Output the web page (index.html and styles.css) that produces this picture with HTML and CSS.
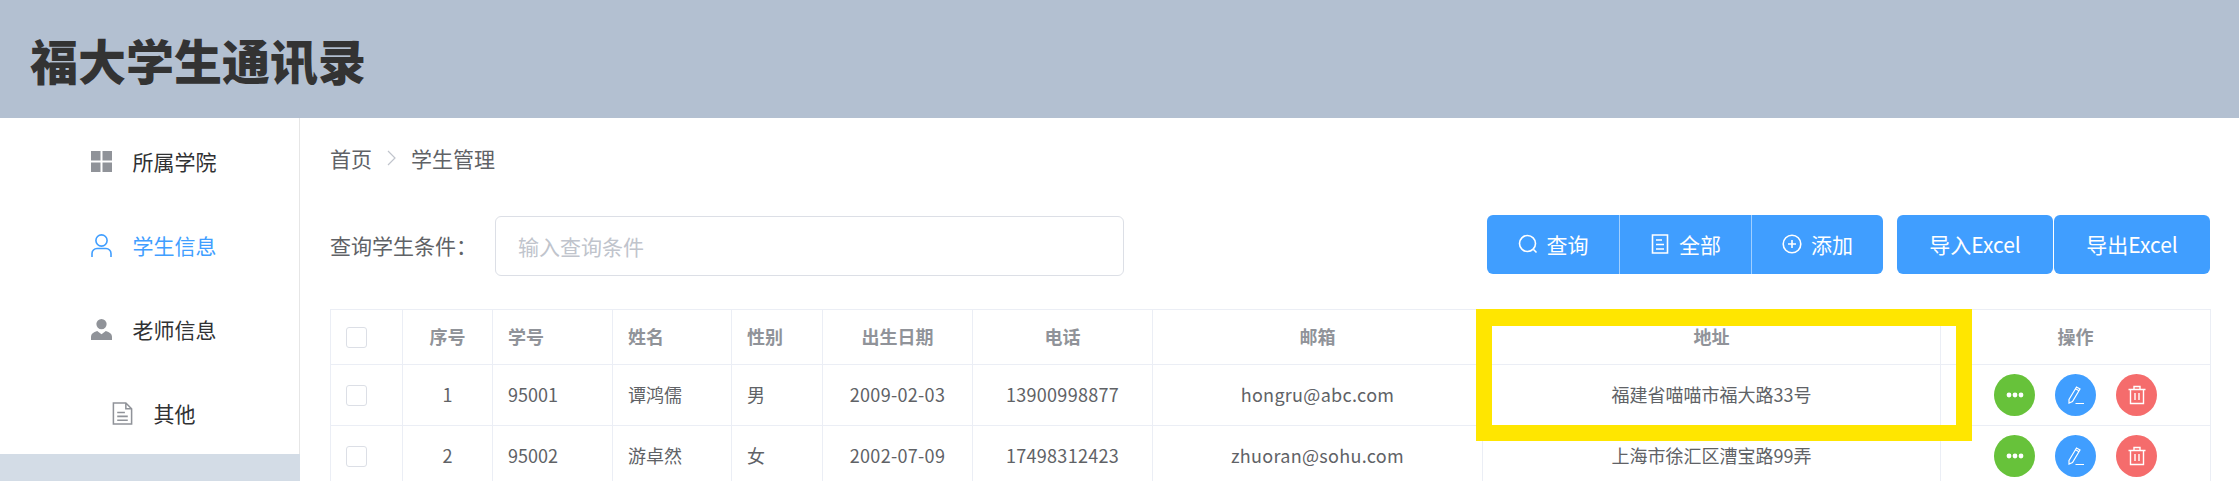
FILE: index.html
```html
<!DOCTYPE html>
<html lang="zh-CN">
<head>
  <meta charset="UTF-8">
  <title>福大学生通讯录</title>
  <link rel="stylesheet" href="styles.css">
</head>
<body>
  <header class="top-bar">
    <h1>福大学生通讯录</h1>
  </header>

  <div class="layout">
    <!-- 侧边栏 -->
    <aside class="side">
      <div class="side-item">
        <svg class="side-icon" viewBox="0 0 21 21"><path fill="#909399" d="M0 0h9.500v9.500H0zM11.500 0H21v9.500h-9.500zM0 11.500h9.500V21H0zM11.500 11.500H21V21h-9.500z"/></svg>
        <span>所属学院</span>
      </div>
      <div class="side-item active">
        <svg class="side-icon" viewBox="0 0 21 23"><g fill="none" stroke="#409eff" stroke-width="1.600"><circle cx="10.500" cy="6.500" r="5.600"/><path d="M1 23v-3.500a5 5 0 0 1 5-5h9a5 5 0 0 1 5 5V23"/></g></svg>
        <span>学生信息</span>
      </div>
      <div class="side-item">
        <svg class="side-icon" viewBox="0 0 22 23"><g fill="#909399"><circle cx="11" cy="5.800" r="5.400"/><path d="M0 22.500v-3.500c0-3 2.500-5 6.500-6l4.500 3.500 4.500-3.500c4 1 6.500 3 6.500 6v3.500z"/></g></svg>
        <span>老师信息</span>
      </div>
      <div class="side-item">
        <svg class="side-icon" viewBox="0 0 21 24"><path fill="none" stroke="#909399" stroke-width="1.600" d="M1 1h13l6 6v16H1zM14 1v6h6M5 11h8M5 15h11M5 19h11"/></svg>
        <span>其他</span>
      </div>
      <div class="side-rest"></div>
    </aside>

    <main class="main">
      <nav class="crumbs">
        <span>首页</span>
        <svg class="crumb-sep" viewBox="0 0 9 16"><path fill="none" stroke="#c0c4cc" stroke-width="1.200" d="M1 1l7 7-7 7"/></svg>
        <span>学生管理</span>
      </nav>

      <div class="toolbar">
        <label class="query-label">查询学生条件：</label>
        <input class="query-input" type="text" placeholder="输入查询条件">
        <div class="btn-group">
          <button class="btn">
            <svg class="btn-icon" viewBox="0 0 20 20"><g fill="none" stroke="#fff" stroke-width="1.600"><circle cx="9.500" cy="9.500" r="8"/><path d="M15.500 15.500l3 3"/></g></svg>
            查询
          </button>
          <button class="btn">
            <svg class="btn-icon" viewBox="0 0 20 20"><path fill="none" stroke="#fff" stroke-width="1.600" d="M2.500 1h15v18h-15zM6 6h6M6 10.500h8M6 15h8"/></svg>
            全部
          </button>
          <button class="btn">
            <svg class="btn-icon" viewBox="0 0 20 20"><g fill="none" stroke="#fff" stroke-width="1.600"><circle cx="10" cy="10" r="8.800"/><path d="M10 6v8M6 10h8"/></g></svg>
            添加
          </button>
        </div>
        <div class="excel-group">
          <button class="btn excel">导入Excel</button>
          <button class="btn excel">导出Excel</button>
        </div>
      </div>

      <div class="table-wrap">
        <table class="students">
          <colgroup>
            <col class="c-check"><col class="c-no"><col class="c-id"><col class="c-name"><col class="c-sex">
            <col class="c-date"><col class="c-tel"><col class="c-mail"><col class="c-addr"><col class="c-ops">
          </colgroup>
          <thead>
            <tr>
              <th class="left"><span class="check"></span></th>
              <th>序号</th>
              <th class="left">学号</th>
              <th class="left">姓名</th>
              <th class="left">性别</th>
              <th>出生日期</th>
              <th>电话</th>
              <th>邮箱</th>
              <th>地址</th>
              <th>操作</th>
            </tr>
          </thead>
          <tbody>
            <tr>
              <td class="left"><span class="check"></span></td>
              <td>1</td>
              <td class="left">95001</td>
              <td class="left">谭鸿儒</td>
              <td class="left">男</td>
              <td class="num">2009-02-03</td>
              <td class="num">13900998877</td>
              <td class="num">hongru@abc.com</td>
              <td>福建省喵喵市福大路33号</td>
              <td>
                <div class="ops">
                  <span class="op green"><svg viewBox="0 0 20 20"><g fill="#fff"><circle cx="4" cy="10" r="2.400"/><circle cx="10" cy="10" r="2.400"/><circle cx="16" cy="10" r="2.400"/></g></svg></span>
                  <span class="op blue"><svg viewBox="0 0 20 20"><path fill="none" stroke="#fff" stroke-width="1.200" d="M3 14.500L10.500 2l3.500 2-7.500 12.500-3.500 1.500zM9.500 3.800l3.500 2M9.500 18.500H18"/></svg></span>
                  <span class="op red"><svg viewBox="0 0 20 20"><path fill="none" stroke="#fff" stroke-width="1.400" d="M1.500 4.500h17M7 4.500V1.500h6v3M3.500 4.500h13v14h-13zM8 8v7M12 8v7"/></svg></span>
                </div>
              </td>
            </tr>
            <tr>
              <td class="left"><span class="check"></span></td>
              <td>2</td>
              <td class="left">95002</td>
              <td class="left">游卓然</td>
              <td class="left">女</td>
              <td class="num">2002-07-09</td>
              <td class="num">17498312423</td>
              <td class="num">zhuoran@sohu.com</td>
              <td>上海市徐汇区漕宝路99弄</td>
              <td>
                <div class="ops">
                  <span class="op green"><svg viewBox="0 0 20 20"><g fill="#fff"><circle cx="4" cy="10" r="2.400"/><circle cx="10" cy="10" r="2.400"/><circle cx="16" cy="10" r="2.400"/></g></svg></span>
                  <span class="op blue"><svg viewBox="0 0 20 20"><path fill="none" stroke="#fff" stroke-width="1.200" d="M3 14.500L10.500 2l3.500 2-7.500 12.500-3.500 1.500zM9.500 3.800l3.500 2M9.500 18.500H18"/></svg></span>
                  <span class="op red"><svg viewBox="0 0 20 20"><path fill="none" stroke="#fff" stroke-width="1.400" d="M1.500 4.500h17M7 4.500V1.500h6v3M3.500 4.500h13v14h-13zM8 8v7M12 8v7"/></svg></span>
                </div>
              </td>
            </tr>
          </tbody>
        </table>
        <!-- 黄色标注框 -->
        <div class="marker"></div>
      </div>
    </main>
  </div>
</body>
</html>
```

FILE: styles.css
```css
/* 全局 */
html, body {
  height: 100%;
}
body {
  margin: 0;
  overflow: hidden;
  background: #fff;
  color: #606266;
  font-family: "Noto Sans CJK SC", "Noto Sans", sans-serif;
}

/* 顶栏 */
.top-bar {
  height: 118px;
  padding-left: 30px;
  display: flex;
  align-items: center;
  background: #b3c0d1;
}
.top-bar h1 {
  margin: 0;
  color: #333;
  font-size: 48px;
  font-weight: 900;
  line-height: 1;
}

.layout {
  display: flex;
  height: 363px;
}

/* 侧边栏 */
.side {
  width: 300px;
  flex: none;
  display: flex;
  flex-direction: column;
  box-sizing: border-box;
  border-right: 1px solid #e6e6e6;
}
.side-item {
  height: 84px;
  flex: none;
  padding: 2px 0 0 8px;
  box-sizing: border-box;
  display: flex;
  align-items: center;
  justify-content: center;
  gap: 21px;
  color: #303133;
  font-size: 21px;
}
.side-item.active {
  color: #409eff;
}
.side-icon {
  width: 21px;
  height: 23px;
  flex: none;
}
.side-rest {
  flex: 1;
  margin-right: -1px;
  background: #d3dce6;
}

/* 内容区 */
.main {
  flex: 1;
  min-width: 0;
  padding: 29px 29px 0 30px;
}
.crumbs {
  height: 22px;
  display: flex;
  align-items: center;
  gap: 15px;
  font-size: 21px;
  line-height: 22px;
}
.crumb-sep {
  width: 9px;
  height: 16px;
}

.toolbar {
  margin-top: 46px;
  display: flex;
  align-items: flex-start;
}
.query-label {
  width: 165px;
  flex: none;
  font-size: 21px;
  line-height: 60px;
}
.query-input {
  width: 629px;
  height: 60px;
  box-sizing: border-box;
  margin: 1px 0 0;
  padding: 0 22px;
  border: 1px solid #dcdfe6;
  border-radius: 6px;
  outline: none;
  font-family: inherit;
  font-size: 21px;
}
.query-input::placeholder {
  color: #c0c4cc;
}

.btn-group {
  margin-left: auto;
  display: flex;
}
.btn {
  height: 59px;
  display: flex;
  align-items: center;
  justify-content: center;
  gap: 9px;
  padding: 0 0 2px;
  border: none;
  background: #409eff;
  color: #fff;
  font-family: inherit;
  font-size: 21px;
  cursor: pointer;
}
.btn-group .btn {
  width: 132px;
}
.btn-group .btn + .btn {
  border-left: 1px solid rgba(255, 255, 255, 0.5);
}
.btn-group .btn:first-child {
  border-radius: 6px 0 0 6px;
}
.btn-group .btn:last-child {
  border-radius: 0 6px 6px 0;
}
.btn-icon {
  width: 20px;
  height: 20px;
}
.excel-group {
  margin-left: 14px;
  display: flex;
  gap: 1px;
}
.btn.excel {
  width: 156px;
  border-radius: 6px;
}

/* 表格 */
.table-wrap {
  position: relative;
  margin-top: 33px;
}
.students {
  width: 1880px;
  table-layout: fixed;
  border-collapse: collapse;
  font-size: 18px;
}
.c-check { width: 72px; }
.c-no { width: 90px; }
.c-id { width: 120px; }
.c-name { width: 119px; }
.c-sex { width: 91px; }
.c-date { width: 150px; }
.c-tel { width: 180px; }
.c-mail { width: 330px; }
.c-addr { width: 458px; }
.c-ops { width: 270px; }

.students th,
.students td {
  padding: 0 15px 2px;
  border: 1px solid #ebeef5;
  text-align: center;
  box-sizing: border-box;
}
.students th {
  height: 55px;
  color: #909399;
  font-weight: 700;
}
.students td {
  height: 61px;
}
.students .left {
  text-align: left;
}
.students .num {
  letter-spacing: 0.3px;
}
.check {
  display: block;
  width: 21px;
  height: 21px;
  margin-top: 2px;
  box-sizing: border-box;
  border: 1px solid #dcdfe6;
  border-radius: 3px;
  background: #fff;
}

.ops {
  margin-top: 2px;
  display: flex;
  justify-content: center;
  gap: 20px;
}
.op {
  width: 41px;
  height: 42px;
  display: flex;
  align-items: center;
  justify-content: center;
  border-radius: 50%;
}
.op svg {
  width: 20px;
  height: 20px;
}
.green { background: #67c23a; }
.blue { background: #409eff; }
.red { background: #f56c6c; }

/* 黄色标注框 */
.marker {
  position: absolute;
  top: 0;
  left: 1146px;
  width: 496px;
  height: 132px;
  box-sizing: border-box;
  border-style: solid;
  border-color: #ffe600;
  border-width: 17px 16px 16px;
}
```
